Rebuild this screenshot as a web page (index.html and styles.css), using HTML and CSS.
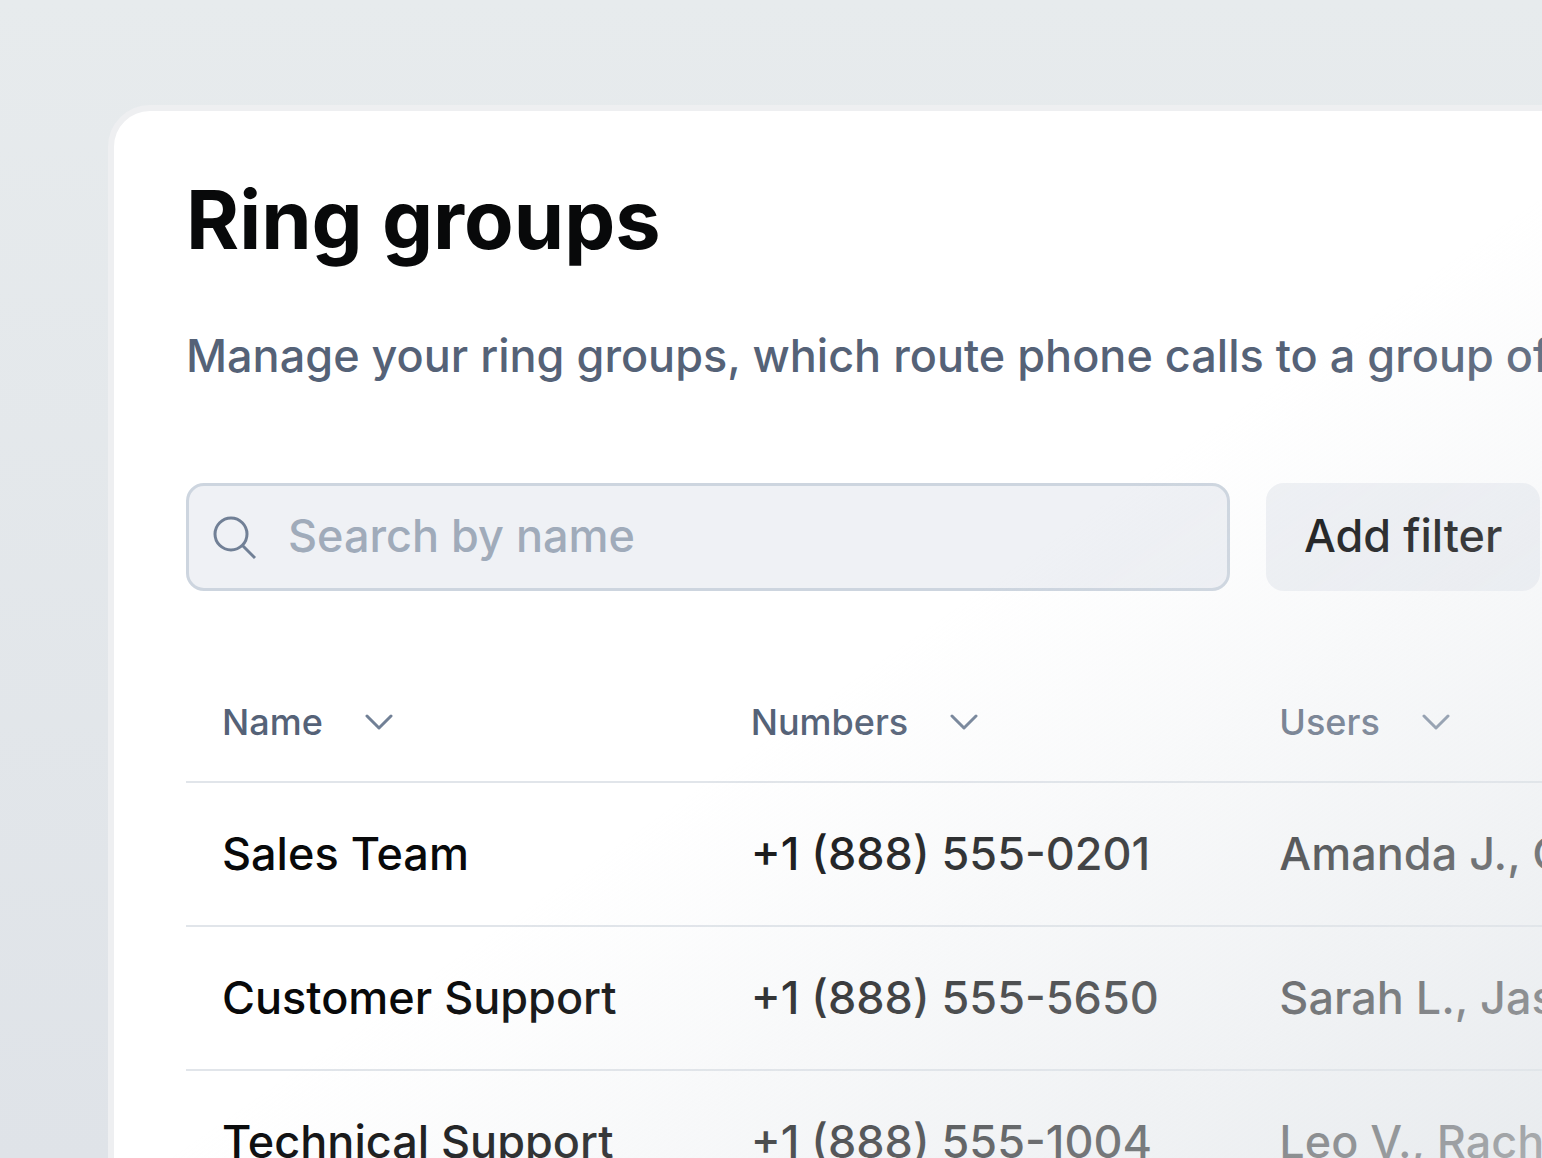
FILE: index.html
```html
<!DOCTYPE html>
<html lang="en">
    <head>
        <meta charset="utf-8">
        <title>Ring groups</title>
        <meta name="viewport" content="width=device-width, initial-scale=1.0">
        <link rel="stylesheet" href="styles.css">
    </head>
    <body>
        <main class="card">
            <h1 class="title">Ring groups</h1>
            <p class="subtitle">Manage your ring groups, which route phone calls to a group of users.</p>
            <div class="toolbar">
                <label class="search">
                    <svg class="search-icon" viewBox="0 0 48 48" aria-hidden="true">
                        <circle cx="21" cy="21" r="16"/>
                        <path d="M32.5 32.5L45 45"/>
                    </svg>
                    <input type="text" placeholder="Search by name" aria-label="Search by name">
                </label>
                <button type="button" class="filter">Add filter</button>
            </div>
            <table class="groups">
                <thead>
                    <tr>
                        <th><button type="button" class="sort">Name <svg viewBox="0 0 28 18" aria-hidden="true"><path d="M2 3L14 15L26 3"/></svg></button></th>
                        <th><button type="button" class="sort">Numbers <svg viewBox="0 0 28 18" aria-hidden="true"><path d="M2 3L14 15L26 3"/></svg></button></th>
                        <th><button type="button" class="sort">Users <svg viewBox="0 0 28 18" aria-hidden="true"><path d="M2 3L14 15L26 3"/></svg></button></th>
                    </tr>
                </thead>
                <tbody>
                    <tr>
                        <td>Sales Team</td>
                        <td>+1 (888) 555-0201</td>
                        <td>Amanda J., Carl M.</td>
                    </tr>
                    <tr>
                        <td>Customer Support</td>
                        <td>+1 (888) 555-5650</td>
                        <td>Sarah L., Jason P.</td>
                    </tr>
                    <tr>
                        <td>Technical Support</td>
                        <td>+1 (888) 555-1004</td>
                        <td>Leo V., Rachel T.</td>
                    </tr>
                </tbody>
            </table>
        </main>
    </body>
</html>
```
FILE: styles.css
```css
*{
    box-sizing: border-box;
    margin: 0;
    padding: 0;
}
html{
    height: 100%;
    overflow: hidden;
}
body{
    height: 100%;
    overflow: hidden;
    padding: 105px 0 0 108px;
    background: linear-gradient(#e7ebed, #dfe3e8);
    font-family: Inter, "Liberation Sans", sans-serif;
    font-size: 45px;
    font-weight: 500;
    color: #08090a;
}
/* the card fades into the page towards the bottom right */
body:after{
    content: '';
    position: fixed;
    top: 0;
    right: 0;
    bottom: 0;
    left: 0;
    background: linear-gradient(145deg, rgba(225,229,233,0) 57%, rgba(225,229,233,.75) 100%);
    pointer-events: none;
}
input,
button{
    font: inherit;
    color: inherit;
    border: 0;
    background: none;
}
button{
    cursor: pointer;
}
svg{
    fill: none;
    stroke: #718096;
    stroke-width: 3;
}
.card{
    width: 120%;
    min-height: 110%;
    padding: 61px 72px;
    border: 6px solid #eeeff1;
    border-radius: 42px;
    background: #fff;
}
.title{
    font-size: 81px;
    font-weight: 700;
    line-height: 96px;
}
.subtitle{
    margin-top: 52px;
    line-height: 72px;
    white-space: nowrap;
    color: #556277;
}
.toolbar{
    display: flex;
    gap: 36px;
    margin-top: 91px;
}
.search{
    display: flex;
    align-items: center;
    flex: 0 0 1044px;
    gap: 30px;
    height: 108px;
    padding: 0 21px;
    border: 3px solid #cdd5df;
    border-radius: 18px;
    background: #eff1f5;
}
.search-icon{
    flex: none;
    width: 48px;
    height: 48px;
}
.search input{
    flex: 1;
    min-width: 0;
    padding-bottom: 3px;
    outline: none;
}
.search input::placeholder{
    color: #a0abba;
    opacity: 1;
}
.filter{
    flex: none;
    padding: 0 38px 3px;
    border-radius: 18px;
    background: #eff1f5;
}
.groups{
    width: 1586px;
    margin-top: 71px;
    table-layout: fixed;
    border-collapse: collapse;
    white-space: nowrap;
}
.groups th,
.groups td{
    padding: 0 36px;
    border-bottom: 2px solid #e1e5ea;
    text-align: left;
}
.groups th{
    height: 120px;
    font-weight: 500;
    color: #556277;
}
.groups td{
    height: 144px;
    padding-bottom: 2px;
}
.sort{
    display: flex;
    align-items: center;
    gap: 42px;
    font-size: 36px;
}
.sort svg{
    width: 28px;
    height: 18px;
    stroke-linecap: round;
    stroke-linejoin: round;
}
```
